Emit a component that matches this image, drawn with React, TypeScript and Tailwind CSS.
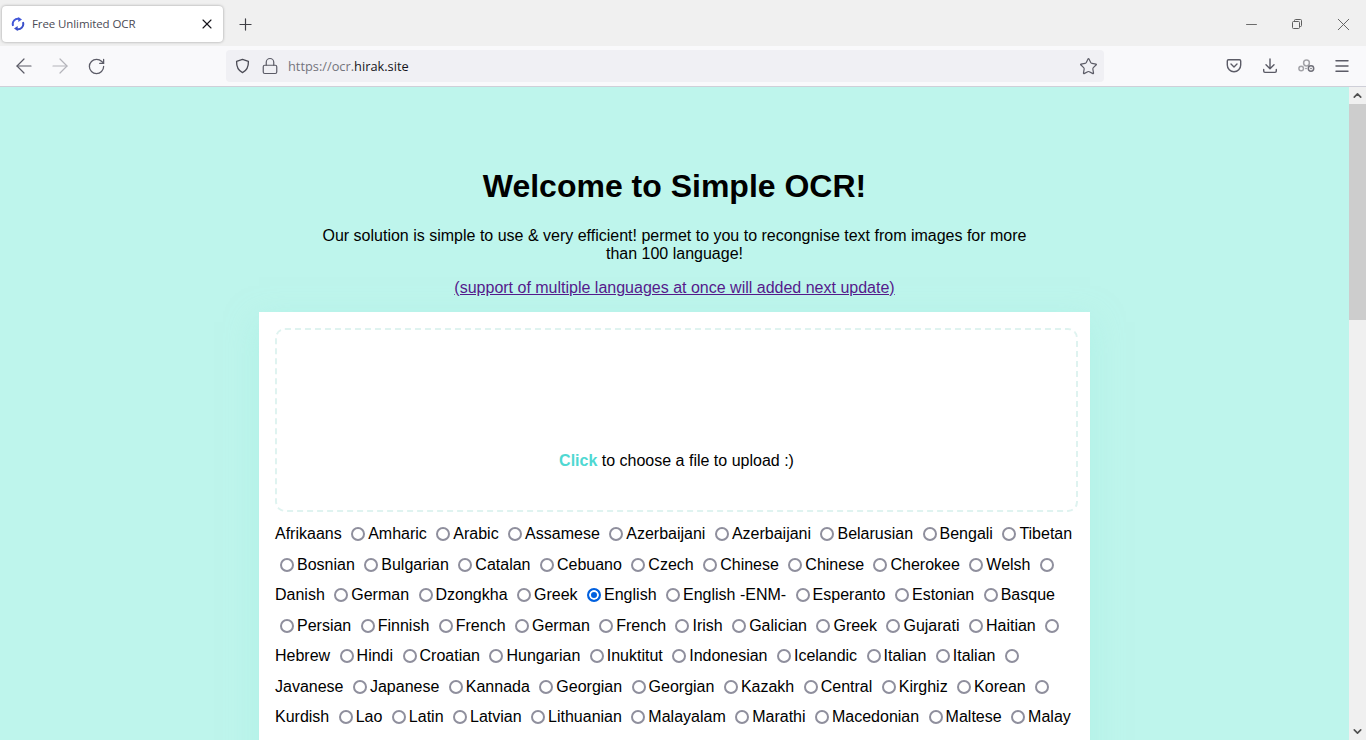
import React from 'react';
import { ArrowLeft, ArrowRight, ChevronDown, ChevronUp, Lock, Menu, Minus, Plus, RotateCw, Star, X } from 'lucide-react';

const LANGUAGES = [
  'Amharic', 'Arabic', 'Assamese', 'Azerbaijani', 'Azerbaijani', 'Belarusian', 'Bengali', 'Tibetan',
  'Bosnian', 'Bulgarian', 'Catalan', 'Cebuano', 'Czech', 'Chinese', 'Chinese', 'Cherokee', 'Welsh',
  'Danish', 'German', 'Dzongkha', 'Greek', 'English', 'English -ENM-', 'Esperanto', 'Estonian', 'Basque',
  'Persian', 'Finnish', 'French', 'German', 'French', 'Irish', 'Galician', 'Greek', 'Gujarati', 'Haitian',
  'Hebrew', 'Hindi', 'Croatian', 'Hungarian', 'Inuktitut', 'Indonesian', 'Icelandic', 'Italian', 'Italian',
  'Javanese', 'Japanese', 'Kannada', 'Georgian', 'Georgian', 'Kazakh', 'Central', 'Kirghiz', 'Korean',
  'Kurdish', 'Lao', 'Latin', 'Latvian', 'Lithuanian', 'Malayalam', 'Marathi', 'Macedonian', 'Maltese', 'Malay',
];

const Favicon = () => (
  <svg width="14" height="14" viewBox="0 0 14 14" fill="none" className="shrink-0">
    <path d="M2.100 8.800A5.200 5.200 0 0 1 8.500 2" stroke="#4257d8" strokeWidth="2" />
    <path d="M11.900 5.200A5.200 5.200 0 0 1 5.500 12" stroke="#3a4fc9" strokeWidth="2" />
    <path d="M7.300 0 11 2.600 7.300 5Z" fill="#4257d8" />
    <path d="M6.700 9 3 11.400 6.700 14Z" fill="#3a4fc9" />
  </svg>
);

const ShieldIcon = () => (
  <svg width="15" height="16" viewBox="0 0 16 16" fill="none" stroke="#4b4b55" strokeWidth="1.400" className="shrink-0">
    <path d="M8 1 14.300 3c.2 5.800-1.600 9.900-6.300 12C3.300 12.900 1.500 8.800 1.700 3L8 1Z" strokeLinejoin="round" />
  </svg>
);

const PocketIcon = () => (
  <svg width="16" height="16" viewBox="0 0 16 16" fill="none" stroke="#5b5b66" strokeWidth="1.400">
    <path d="M2.500 1.700h11c.7 0 1.200.5 1.200 1.200V7c0 3.800-3 6.800-6.700 6.800S1.300 10.800 1.300 7V2.900c0-.7.5-1.200 1.200-1.200Z" />
    <path d="M5 6l3 3 3-3" strokeLinecap="round" strokeLinejoin="round" />
  </svg>
);

const DownloadIcon = () => (
  <svg width="16" height="16" viewBox="0 0 16 16" fill="none" stroke="#5b5b66" strokeWidth="1.400" strokeLinecap="round" strokeLinejoin="round">
    <path d="M8 1v9.500M4 6.800l4 4 4-4" />
    <path d="M1.700 11.500v1.600c0 .8.500 1.300 1.300 1.300h10c.8 0 1.300-.5 1.300-1.300v-1.600" />
  </svg>
);

const ExtensionIcon = () => (
  <svg width="17" height="14" viewBox="0 0 17 14" fill="none" stroke="#a3a3a8" strokeWidth="1.500">
    <circle cx="8.500" cy="4" r="2.900" />
    <circle cx="3.200" cy="9.500" r="2.300" />
    <circle cx="13" cy="9.500" r="2.700" stroke="#6f6f78" />
    <circle cx="13" cy="9.500" r=".8" fill="#6f6f78" stroke="none" />
    <circle cx="8" cy="9.500" r=".8" fill="#8a8a92" stroke="none" />
  </svg>
);

const RestoreIcon = () => (
  <svg width="10" height="10" viewBox="0 0 10 10" fill="none" stroke="#5f5f5f" strokeWidth="1">
    <rect x=".5" y="2.500" width="7" height="7" rx="1" />
    <path d="M2.500 2.500V1.500a1 1 0 0 1 1-1h5a1 1 0 0 1 1 1v5a1 1 0 0 1-1 1h-1" />
  </svg>
);

const ToolbarButton: React.FC<{ children: React.ReactNode }> = ({ children }) => (
  <div className="w-9 h-full flex items-center justify-center">{children}</div>
);

const LanguageOption: React.FC<{ name: string; checked: boolean }> = ({ name, checked }) => (
  <>
    <input
      type="radio"
      name="language"
      defaultChecked={checked}
      className="appearance-none inline-block w-[14px] h-[14px] ml-[5px] mr-[3px] align-[-2px] rounded-full border-2 border-[#8f8f9d] checked:border-[#0060df] checked:bg-[#0060df] checked:shadow-[inset_0_0_0_2px_white]"
    />
    <label>{name}</label>{' '}
  </>
);

export default function App() {
  return (
    <div className="h-[740px] flex flex-col overflow-hidden bg-white font-['Liberation_Sans',Arial,sans-serif]">
      {/* tab strip */}
      <div className="h-[46px] shrink-0 bg-[#f0f0f0] flex items-start pl-[2px] pt-[6px] font-['Open_Sans',sans-serif]">
        <div className="w-[221px] h-[36px] bg-white rounded-[4px] shadow-[0_0_3px_rgba(0,0,0,0.35)] flex items-center pl-[9px] pr-[8px]">
          <Favicon />
          <span className="ml-[7px] text-[11.5px] text-[#4a4a55] flex-1 tracking-[-0.1px]">Free Unlimited OCR</span>
          <X size={16} strokeWidth={1.700} className="text-[#15141a]" />
        </div>
        <div className="w-[44px] h-[36px] flex items-center justify-center">
          <Plus size={19} strokeWidth={1.500} className="text-[#3f3f46]" />
        </div>
        <div className="flex-1" />
        <div className="w-[138px] h-[36px] flex items-center text-[#5f5f5f]">
          <div className="w-[46px] flex justify-center"><Minus size={17} strokeWidth={1.300} /></div>
          <div className="w-[46px] flex justify-center"><RestoreIcon /></div>
          <div className="w-[46px] flex justify-center"><X size={21} strokeWidth={1.100} /></div>
        </div>
      </div>

      {/* nav toolbar */}
      <div className="h-[41px] shrink-0 bg-[#f9f9fb] border-b border-[#cfcfd8] flex items-center pl-[6px] font-['Open_Sans',sans-serif]">
        <ToolbarButton><ArrowLeft size={24} strokeWidth={1.200} className="text-[#5b5b66]" /></ToolbarButton>
        <ToolbarButton><ArrowRight size={24} strokeWidth={1.200} className="text-[#b4b4ba]" /></ToolbarButton>
        <ToolbarButton><RotateCw size={19} strokeWidth={1.600} className="text-[#5b5b66]" /></ToolbarButton>
        <div className="ml-[112px] w-[878px] h-[32px] bg-[#f0f0f4] rounded-[4px] flex items-center pl-[9px] pr-[6px]">
          <ShieldIcon />
          <Lock size={18} strokeWidth={1.600} className="ml-[11px] text-[#5b5b66]" />
          <span className="ml-[9px] pt-[2px] text-[12.8px] text-[#74747c]">https://ocr.<span className="text-[#15141a]">hirak.site</span></span>
          <div className="flex-1" />
          <Star size={19} strokeWidth={1.500} className="text-[#5b5b66]" />
        </div>
        <div className="ml-[112px] flex h-full">
          <ToolbarButton><PocketIcon /></ToolbarButton>
          <ToolbarButton><DownloadIcon /></ToolbarButton>
          <ToolbarButton><ExtensionIcon /></ToolbarButton>
          <ToolbarButton><Menu size={18} strokeWidth={1.900} className="text-[#5b5b66]" /></ToolbarButton>
        </div>
      </div>

      {/* viewport */}
      <div className="flex-1 min-h-0 flex">
        <div className="flex-1 min-w-0 overflow-hidden bg-[#bef5ec] text-black pt-[81px] text-center">
          <h1 className="text-[32px] leading-[37px] font-bold">Welcome to Simple OCR!</h1>
          <p className="mt-[22px] mx-auto w-[720px] text-[16px] leading-[18px]">
            Our solution is simple to use &amp; very efficient! permet to you to recongnise text from images for more than 100 language!
          </p>
          <p className="mt-[16px] text-[16px] leading-[18px]">
            <a href="#" className="text-[#551a8b] underline">(support of multiple languages at once will added next update)</a>
          </p>
          <div className="mt-[15px] mx-auto w-[831px] bg-white pt-[16px] pb-[60px] pl-[16px] pr-[12px] text-left shadow-[0_10px_30px_rgba(160,238,226,0.5)]">
            <div className="h-[184px] rounded-[10px] border-2 border-dashed border-[#dff3f0] flex items-end justify-center pb-[40px] text-[16px] leading-[18px]">
              <span><b className="text-[#4fd8d2]">Click</b> to choose a file to upload :)</span>
            </div>
            <div className="mt-[7px] text-[16px] leading-[30.5px]">
              <label>Afrikaans</label>{' '}
              {LANGUAGES.map((name, idx) => (
                <LanguageOption key={idx} name={name} checked={name === 'English'} />
              ))}
            </div>
          </div>
        </div>

        {/* scrollbar */}
        <div className="w-[17px] shrink-0 bg-[#f0f0f0] flex flex-col">
          <div className="h-[17px] flex items-center justify-center"><ChevronUp size={13} strokeWidth={3} className="text-[#505050]" /></div>
          <div className="h-[216px] bg-[#cdcdcd]" />
          <div className="flex-1" />
          <div className="h-[17px] flex items-center justify-center"><ChevronDown size={13} strokeWidth={3} className="text-[#505050]" /></div>
        </div>
      </div>
    </div>
  );
}
